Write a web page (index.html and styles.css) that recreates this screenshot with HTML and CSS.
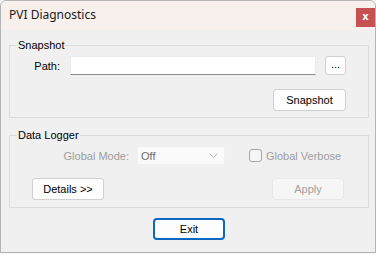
FILE: index.html
```html
<!DOCTYPE html>
<html>
<head>
<meta charset="utf-8">
<link rel="stylesheet" href="styles.css">
</head>
<body>
<div class="window">
  <div class="titlebar">
    <span class="title">PVI Diagnostics</span>
    <span class="close">x</span>
  </div>
  <div class="client">
    <fieldset class="group group-snapshot">
      <legend>Snapshot</legend>
      <div class="row row-path">
        <label class="lbl lbl-path">Path:</label>
        <div class="edit"></div>
        <button class="btn btn-dots">...</button>
      </div>
      <div class="row row-end">
        <button class="btn btn-std">Snapshot</button>
      </div>
    </fieldset>
    <fieldset class="group group-logger">
      <legend>Data Logger</legend>
      <div class="row row-mode">
        <label class="lbl lbl-mode disabled">Global Mode:</label>
        <div class="combo">
          <span class="combo-text">Off</span>
          <svg class="chev" width="9" height="6" viewBox="0 0 9 6"><path d="M0.5 0.5 L4.5 4.5 L8.5 0.5" fill="none" stroke="#b4b4b4" stroke-width="1"/></svg>
        </div>
        <span class="check"></span>
        <span class="check-label disabled">Global Verbose</span>
      </div>
      <div class="row row-split">
        <button class="btn btn-std">Details &gt;&gt;</button>
        <button class="btn btn-std btn-disabled">Apply</button>
      </div>
    </fieldset>
    <div class="footer">
      <button class="btn btn-std btn-default">Exit</button>
    </div>
  </div>
</div>
</body>
</html>
```

FILE: styles.css
```css
html, body {
  margin: 0;
  padding: 0;
  background: #f3f3f3;
}
body {
  width: 376px;
  height: 254px;
  overflow: hidden;
  font-family: "Liberation Sans", Arial, sans-serif;
  font-size: 11px;
  color: #000;
}
.window {
  box-sizing: border-box;
  width: 376px;
  height: 253px;
  border: 1px solid #b4b4b4;
  border-radius: 6px 6px 0 0;
  overflow: hidden;
  background: #f0f0f0;
}
.titlebar {
  height: 29px;
  background: #f7f0ed;
  display: flex;
  align-items: flex-start;
  justify-content: space-between;
}
.title {
  font-family: "Noto Sans", "Liberation Sans", sans-serif;
  font-size: 12px;
  line-height: 16px;
  margin: 6px 0 0 8px;
  color: #1a1a1a;
}
.close {
  width: 19px;
  height: 19px;
  margin-top: 7px;
  background: #c75050;
  color: #fff;
  font-weight: bold;
  font-size: 10px;
  line-height: 17px;
  text-align: center;
  font-family: "DejaVu Sans", sans-serif;
}
.client {
  padding: 0 0 0 8px;
  display: flex;
  flex-direction: column;
}
.group {
  box-sizing: border-box;
  width: 360px;
  margin: 8px 0 0 0;
  padding: 4px 0 0 0;
  border: 1px solid #dcdcdc;
  min-width: 0;
}
.group-logger {
  margin-top: 10px;
}
.group legend {
  font-size: 11px;
  line-height: 14px;
  padding: 0 1px;
  margin-left: 7px;
  color: #000;
}
.group-snapshot {
  padding-bottom: 6px;
}
.group-logger {
  padding-bottom: 7px;
}
.row {
  display: flex;
  align-items: center;
}
.row-path {
  height: 19px;
}
.lbl {
  text-align: right;
  flex: none;
}
.lbl-path {
  width: 50px;
  margin-right: 10px;
}
.edit {
  box-sizing: border-box;
  width: 246px;
  height: 19px;
  background: #fff;
  border: 1px solid #ececec;
  border-bottom-color: #8a8a8a;
  margin-right: 9px;
}
.btn {
  box-sizing: border-box;
  font-family: "Liberation Sans", Arial, sans-serif;
  font-size: 11px;
  color: #000;
  background: #fdfdfd;
  border: 1px solid #d0d0d0;
  border-radius: 3px;
  padding: 0;
  margin: 0;
}
.btn-dots {
  width: 21px;
  height: 19px;
  line-height: 13px;
  padding-bottom: 2px;
}
.btn-std {
  width: 72px;
  height: 22px;
}
.row-end {
  justify-content: flex-end;
  margin-top: 14px;
  padding-right: 22px;
}
.row-end .btn-std {
  width: 73px;
}
.row-mode {
  height: 19px;
}
.lbl-mode {
  width: 119px;
  margin-right: 8px;
}
.disabled {
  color: #9d9d9d;
}
.combo {
  box-sizing: border-box;
  width: 88px;
  height: 19px;
  background: #fafafa;
  border: 1px solid #f1f1f1;
  border-radius: 2px;
  display: flex;
  align-items: center;
  justify-content: space-between;
  padding: 0 6px 0 3px;
  margin-right: 24px;
}
.combo-text {
  color: #6d6d6d;
}
.check {
  box-sizing: border-box;
  width: 13px;
  height: 13px;
  border: 1px solid #a6a6a6;
  border-radius: 3px;
  background: #f6f6f6;
  margin-right: 4px;
}
.check-label {
  font-size: 11px;
}
.row-split {
  justify-content: space-between;
  margin-top: 13px;
  padding: 0 24px 0 22px;
}
.btn-disabled {
  background: #f6f6f6;
  border-color: #e8e8e8;
  color: #a0a0a0;
}
.footer {
  width: 360px;
  display: flex;
  justify-content: center;
  margin-top: 10px;
}
.btn-default {
  border: 2px solid #0b67c2;
  border-radius: 4px;
}
```
